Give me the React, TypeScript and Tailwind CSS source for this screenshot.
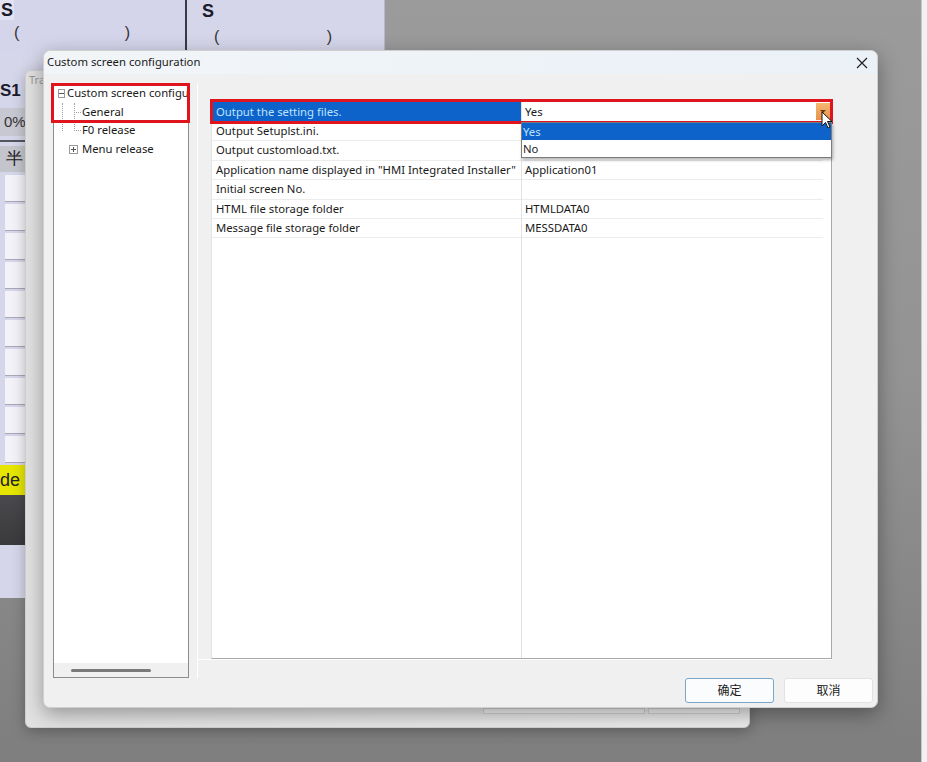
import React from 'react';

// property rows shown in the grid (first row is the selected one)
const rows = [
  { label: 'Output the setting files.', value: 'Yes' },
  { label: 'Output Setuplst.ini.', value: '' },
  { label: 'Output customload.txt.', value: '' },
  { label: 'Application name displayed in "HMI Integrated Installer"', value: 'Application01' },
  { label: 'Initial screen No.', value: '' },
  { label: 'HTML file storage folder', value: 'HTMLDATA0' },
  { label: 'Message file storage folder', value: 'MESSDATA0' },
];

const font = "font-['Noto_Sans','Noto_Sans_CJK_SC',sans-serif]";

// the dimmed application behind the dialog
const BackgroundApp: React.FC = () => (
  <div className="absolute left-0 top-0 w-[385px] h-[598px] bg-[#d6d6ea] font-['Liberation_Sans',sans-serif]">
    <div className="flex h-[50px] border-r border-[#b8b8c8]">
      <div className="w-[187px] border-r-2 border-[#3a3a44] bg-[#d4d4ea]">
        <div className="flex items-start gap-1">
          <span className="px-[1px] bg-[#e2e2f2] text-[18px] font-bold leading-[20px] text-[#1a1a2a]">S</span>
        </div>
        <div className="flex justify-between w-[130px] pl-[14px] pt-[1px] text-[16px] leading-[24px] text-[#333]">
          <span>(</span>
          <span>)</span>
        </div>
      </div>
      <div className="flex-1 pl-[15px]">
        <span className="text-[18px] font-bold leading-[20px] text-[#1a1a2a]">S</span>
        <div className="flex justify-between w-[130px] pl-[12px] pt-[1px] text-[16px] leading-[24px] text-[#333]">
          <span>(</span>
          <span>)</span>
        </div>
      </div>
    </div>
    <div className="w-[25px] flex flex-col">
      <div className="h-[24px]"></div>
      <div className="h-[34px] text-[17px] font-bold leading-[34px] text-[#1a1a2a]">S1</div>
      <div className="h-[28px] bg-[#c8c8d2] text-[15px] leading-[28px] pl-[4px] text-[#333]">0%</div>
      <div className="h-[6px] border-b-2 border-[#55555f]"></div>
      <div className="h-[26px] mt-[4px] bg-[#c4c4cc] text-[17px] leading-[26px] pl-[6px] text-[#222]">半</div>
      <div className="flex flex-col gap-[2px] pl-[5px] pt-[3px]">
        {Array.from({ length: 10 }).map((_, i) => (
          <div key={i} className="h-[27px] bg-[#f2f2f8] border-b border-[#a8a8b8]"></div>
        ))}
      </div>
      <div className="h-[30px] mt-[2px] bg-[#e6e600] text-[18px] leading-[30px] text-[#222] overflow-hidden whitespace-nowrap">de</div>
      <div className="h-[50px] bg-gradient-to-b from-[#4a4a4e] to-[#3a3a3c]"></div>
      <div className="flex-1 bg-[#dcdce4]"></div>
    </div>
  </div>
);

// the window behind the dialog ("Tra...")
const BehindWindow: React.FC = () => (
  <div className="absolute left-[25px] top-[70px] w-[725px] h-[658px] rounded-[6px] bg-gradient-to-r from-[#e2e2e2] to-[#ececec] border border-[#cfcfcf] shadow-[0_4px_14px_rgba(0,0,0,0.25)] overflow-hidden">
    <div className="pl-[3px] pt-[1px] text-[11px] text-[#9a9a9a] font-['Noto_Sans',sans-serif]">Trans</div>
    <div className="absolute left-[457px] bottom-[13px] w-[162px] h-[6px] bg-[#f4f4f4] border border-[#d4d4d4]"></div>
    <div className="absolute left-[622px] bottom-[13px] w-[92px] h-[6px] bg-[#f4f4f4] border border-[#d4d4d4]"></div>
  </div>
);

const TreePanel: React.FC = () => (
  <div className="relative w-[136px] flex flex-col bg-white border border-[#8c8c8c]">
    <div className="flex-1 text-[11.3px] leading-[18.7px] text-[#1a1a1a] overflow-hidden whitespace-nowrap">
      <div className="flex items-center h-[18.7px] pl-[4px]">
        <span className="w-[9px] h-[9px] border border-[#9a9a9a] flex items-center justify-center mr-[2px]">
          <span className="w-[5px] h-[1px] bg-[#555]"></span>
        </span>
        <span>Custom screen configuration</span>
      </div>
      <div className="relative">
        <div className="absolute left-[8px] top-0 h-[28px] border-l border-dotted border-[#a0a0a0]"></div>
        <div className="absolute left-[20px] top-0 h-[28px] border-l border-dotted border-[#a0a0a0]"></div>
        <div className="flex items-center h-[18.7px] pl-[20px]">
          <span className="w-[7px] border-t border-dotted border-[#a0a0a0] mr-[1px]"></span>
          <span>General</span>
        </div>
        <div className="flex items-center h-[18.7px] pl-[20px]">
          <span className="w-[7px] border-t border-dotted border-[#a0a0a0] mr-[1px]"></span>
          <span>F0 release</span>
        </div>
        <div className="flex items-center h-[18.7px] pl-[15px]">
          <span className="w-[9px] h-[9px] bg-white border border-[#9a9a9a] flex items-center justify-center mr-[4px] relative">
            <span className="absolute w-[5px] h-[1px] bg-[#555]"></span>
            <span className="absolute w-[1px] h-[5px] bg-[#555]"></span>
          </span>
          <span>Menu release</span>
        </div>
      </div>
    </div>
    <div className="h-[14px] bg-[#f0f0f0] flex items-center pl-[17px]">
      <div className="w-[80px] h-[3px] rounded-full bg-[#7a7a7a]"></div>
    </div>
    {/* red annotation around the selected node */}
    <div className="absolute left-[-3px] top-[-1px] w-[139px] h-[40px] border-[3px] border-[#e0141c]"></div>
  </div>
);

const PropertyGrid: React.FC = () => (
  <div className="relative w-[621px] h-[559px] bg-white border-l border-t border-[#e4e4e4] border-r border-b border-r-[#a8a8a8] border-b-[#a8a8a8] text-[11.3px] text-[#1a1a1a]">
    <div className="absolute left-[309px] top-0 bottom-0 border-l border-[#e2e2e2]"></div>
    <div className="flex flex-col">
      {rows.map((r, i) =>
        i === 0 ? (
          <div key={i} className="flex h-[21px]">
            <div className="w-[310px] bg-[#0d63c9] text-[#bfe2ff] pl-[4px] leading-[21px] whitespace-nowrap">{r.label}</div>
            <div className="flex-1 flex items-center pl-[3px] pr-[1px] bg-white">
              <span className="flex-1 leading-[19px]">{r.value}</span>
              <span className="w-[14px] h-[17px] bg-gradient-to-b from-[#f6b870] to-[#e8904a] flex items-center justify-center">
                <svg width="6" height="4" viewBox="0 0 6 4"><path d="M0 0h6L3 3z" fill="#6a3a10" /></svg>
              </span>
            </div>
          </div>
        ) : (
          <div key={i} className="flex h-[19.4px] border-b border-[#ececec] mr-[8px]">
            <div className="w-[310px] pl-[4px] leading-[18px] whitespace-nowrap">{r.label}</div>
            <div className="flex-1 pl-[3px] leading-[18px]">{r.value}</div>
          </div>
        )
      )}
    </div>
    {/* red annotation around the first row */}
    <div className="absolute left-[-2px] top-[-2px] w-[623px] h-[25px] border-[3px] border-[#e0141c]"></div>
    {/* open drop-down list */}
    <div className="absolute left-[309px] top-[21px] w-[311px] h-[36px] bg-white border border-[#7c7c7c] shadow-[1px_2px_3px_rgba(0,0,0,0.3)]">
      <div className="h-[17px] bg-[#0d63c9] text-[#bfe2ff] pl-[1px] leading-[17px]">Yes</div>
      <div className="h-[17px] pl-[1px] leading-[17px]">No</div>
    </div>
    {/* mouse pointer */}
    <svg className="absolute left-[609px] top-[10px]" width="12" height="18" viewBox="0 0 12 18">
      <path d="M1 1v14l3.5-3.5 2.5 5.5 2-1-2.5-5.5H11z" fill="white" stroke="#111" strokeWidth="1" strokeLinejoin="round" />
    </svg>
  </div>
);

const Dialog: React.FC = () => (
  <div className={`absolute left-[43px] top-[50px] w-[835px] h-[658px] rounded-[7px] bg-[#f0f0f0] border border-[#cfcfcf] shadow-[0_6px_20px_rgba(0,0,0,0.35)] flex flex-col ${font}`}>
    <div className="h-[23px] flex items-center justify-between pl-[3px] pr-[9px] rounded-t-[7px] bg-gradient-to-r from-[#f2f5f8] to-[#eaf1f7] text-[11.3px] text-[#1a1a1a]">
      <span>Custom screen configuration</span>
      <svg width="12" height="12" viewBox="0 0 12 12"><path d="M1 1l10 10M11 1L1 11" stroke="#222" strokeWidth="1.2" /></svg>
    </div>
    <div className="flex pl-[9px] pt-[9px] h-[604px]">
      <TreePanel />
      <div className="ml-[8px] w-[14px] border-l border-white"></div>
      <div className="pt-[17px] flex flex-col">
        <PropertyGrid />
        <div className="h-[19px] border-t border-white -ml-[14px]"></div>
      </div>
    </div>
    <div className="flex justify-end gap-[10px] pr-[4px]">
      <button className="w-[89px] h-[25px] bg-[#fafcfd] border border-[#7aa6c8] rounded-[3px] text-[12px] text-[#1a1a1a]">确定</button>
      <button className="w-[89px] h-[25px] bg-[#fdfdfd] border border-[#e2e2e2] rounded-[3px] text-[12px] text-[#1a1a1a]">取消</button>
    </div>
  </div>
);

export default function App() {
  return (
    <div className="relative w-[927px] h-[762px] overflow-hidden bg-gradient-to-b from-[#9b9b9b] via-[#939393] to-[#7e7e7e]">
      <BackgroundApp />
      <BehindWindow />
      <Dialog />
      <div className="absolute right-0 top-0 w-[6px] h-full bg-[#f1f1f1] border-l border-[#c8c8c8]"></div>
    </div>
  );
}
